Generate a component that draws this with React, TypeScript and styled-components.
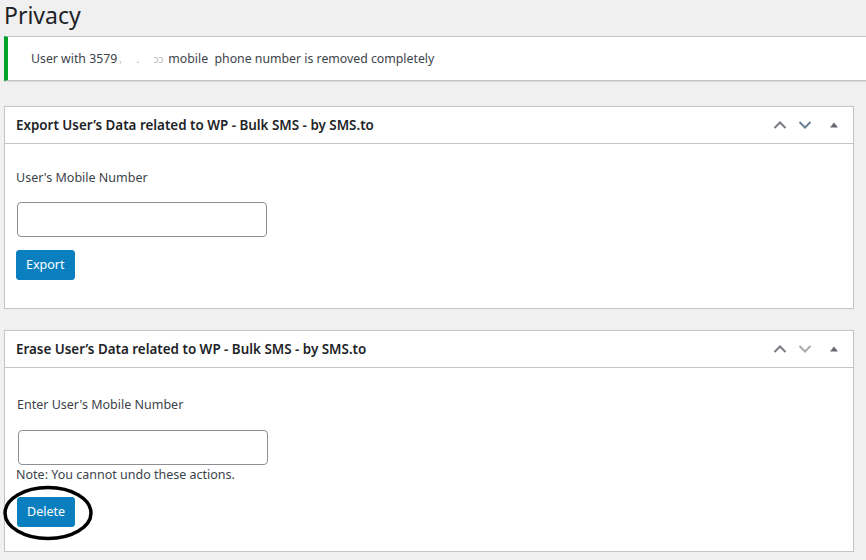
import React from "react";
import styled, { createGlobalStyle } from "styled-components";

const Global = createGlobalStyle`
  html, body { margin: 0; padding: 0; background: #f0f0f1; }
  body { font-family: "Noto Sans", "Open Sans", sans-serif; color: #3c434a; font-size: 13px; }
  * { box-sizing: border-box; }
`;

const Page = styled.div`
  width: 866px;
  height: 560px;
  overflow: hidden;
  padding: 0 0 0 4px;
  display: flex;
  flex-direction: column;
`;

const Title = styled.h1`
  margin: 0;
  height: 36px;
  font-size: 23px;
  font-weight: 400;
  line-height: 30px;
  color: #1d2327;
  padding-top: 0;
`;

const Notice = styled.div`
  margin-right: -10px;
  height: 45px;
  background: #fff;
  border-left: 4px solid #00a32a;
  box-shadow: 0 1px 1px rgba(0, 0, 0, 0.08);
  border-top: 1px solid #c3c4c7;
  border-bottom: 1px solid #c3c4c7;
  display: flex;
  align-items: center;
  padding-left: 23px;
  font-size: 12.3px;
  color: #3c434a;
  white-space: pre;
`;

const Masked = styled.span`
  display: inline-flex;
  justify-content: space-between;
  align-items: baseline;
  width: 44px;
  margin: 0 5px 0 2px;
  color: #b8b8b8;
  font-size: 10px;
`;

const Panels = styled.div`
  display: flex;
  flex-direction: column;
  gap: 21px;
  margin-top: 25px;
  width: 850px;
`;

const Panel = styled.div<{ $h: number }>`
  background: #fff;
  border: 1px solid #c3c4c7;
  height: ${(p) => p.$h}px;
  display: flex;
  flex-direction: column;
`;

const PanelHead = styled.div`
  height: 37px;
  border-bottom: 1px solid #c3c4c7;
  display: flex;
  align-items: center;
  padding-left: 11px;
  padding-right: 7px;
`;

const PanelTitle = styled.h2`
  flex: 1;
  margin: 0;
  font-size: 13.4px;
  font-weight: 600;
  color: #1d2327;
`;

const Controls = styled.div`
  display: flex;
  align-items: center;
  gap: 9px;
`;

const Ctl = styled.span<{ $w?: number }>`
  width: ${(p) => p.$w ?? 16}px;
  height: 16px;
  display: inline-flex;
  align-items: center;
  justify-content: center;
`;

const Body = styled.div<{ $pt: number }>`
  padding: ${(p) => p.$pt}px 11px 0 11px;
  display: flex;
  flex-direction: column;
  align-items: flex-start;
`;

const Label = styled.div<{ $ml?: number }>`
  font-size: 12.5px;
  color: #3c434a;
  line-height: 18px;
  margin-left: ${(p) => p.$ml ?? 0}px;
`;

const Input = styled.input<{ $mt: number; $ml: number }>`
  margin-top: ${(p) => p.$mt}px;
  margin-left: ${(p) => p.$ml}px;
  width: 250px;
  height: 35px;
  border: 1px solid #8c8f94;
  border-radius: 4px;
  background: #fff;
`;

const Note = styled.div`
  font-size: 12.5px;
  color: #3c434a;
  line-height: 18px;
  margin-top: 1px;
`;

const Button = styled.button<{ $mt?: number; $ml?: number }>`
  margin-top: ${(p) => p.$mt ?? 0}px;
  margin-left: ${(p) => p.$ml ?? 0}px;
  height: 30px;
  padding: 0 9px;
  background: #0a7fc0;
  color: #fff;
  border: 1px solid #0a7fc0;
  border-radius: 3px;
  font-family: inherit;
  font-size: 12.5px;
  line-height: 28px;
`;

const CircleWrap = styled.div`
  position: relative;
  margin-top: 13px;
`;

const Ring = styled.svg`
  position: absolute;
  left: -13px;
  top: -12px;
  pointer-events: none;
`;

const Up = ({ c }: { c: string }) => (
  <svg width="16" height="16" viewBox="0 0 16 16">
    <path d="M2.5 11 L8 5.5 L13.5 11" fill="none" stroke={c} strokeWidth="2" />
  </svg>
);
const Down = ({ c }: { c: string }) => (
  <svg width="16" height="16" viewBox="0 0 16 16">
    <path d="M2.5 5 L8 10.5 L13.5 5" fill="none" stroke={c} strokeWidth="2" />
  </svg>
);
const Tri = () => (
  <svg width="10" height="10" viewBox="0 0 10 10">
    <path d="M1 7.5 L5 2.5 L9 7.5 Z" fill="#646970" />
  </svg>
);

export default function App() {
  return (
    <>
      <Global />
      <Page>
        <Title>Privacy</Title>
        <Notice>
          User with 3579
          <Masked>
            <span>,</span>
            <span>.</span>
            <span>ɔɔ</span>
          </Masked>
          mobile  phone number is removed completely
        </Notice>
        <Panels>
          <Panel $h={203}>
            <PanelHead>
              <PanelTitle>Export User’s Data related to WP - Bulk SMS - by SMS.to</PanelTitle>
              <Controls>
                <Ctl><Up c="#787c82" /></Ctl>
                <Ctl><Down c="#6b7f92" /></Ctl>
                <Ctl $w={24}><Tri /></Ctl>
              </Controls>
            </PanelHead>
            <Body $pt={25}>
              <Label>User's Mobile Number</Label>
              <Input $mt={15} $ml={1} />
              <Button $mt={13}>Export</Button>
            </Body>
          </Panel>
          <Panel $h={222}>
            <PanelHead>
              <PanelTitle>Erase User’s Data related to WP - Bulk SMS - by SMS.to</PanelTitle>
              <Controls>
                <Ctl><Up c="#787c82" /></Ctl>
                <Ctl><Down c="#a7aaad" /></Ctl>
                <Ctl $w={24}><Tri /></Ctl>
              </Controls>
            </PanelHead>
            <Body $pt={28}>
              <Label $ml={1}>Enter User's Mobile Number</Label>
              <Input $mt={16} $ml={2} />
              <Note>Note: You cannot undo these actions.</Note>
              <CircleWrap>
                <Button $ml={1}>Delete</Button>
                <Ring width="90" height="56" viewBox="0 0 90 56">
                  <ellipse cx="45" cy="28" rx="43" ry="25.5" fill="none" stroke="#000" strokeWidth="3.5" />
                </Ring>
              </CircleWrap>
            </Body>
          </Panel>
        </Panels>
      </Page>
    </>
  );
}
